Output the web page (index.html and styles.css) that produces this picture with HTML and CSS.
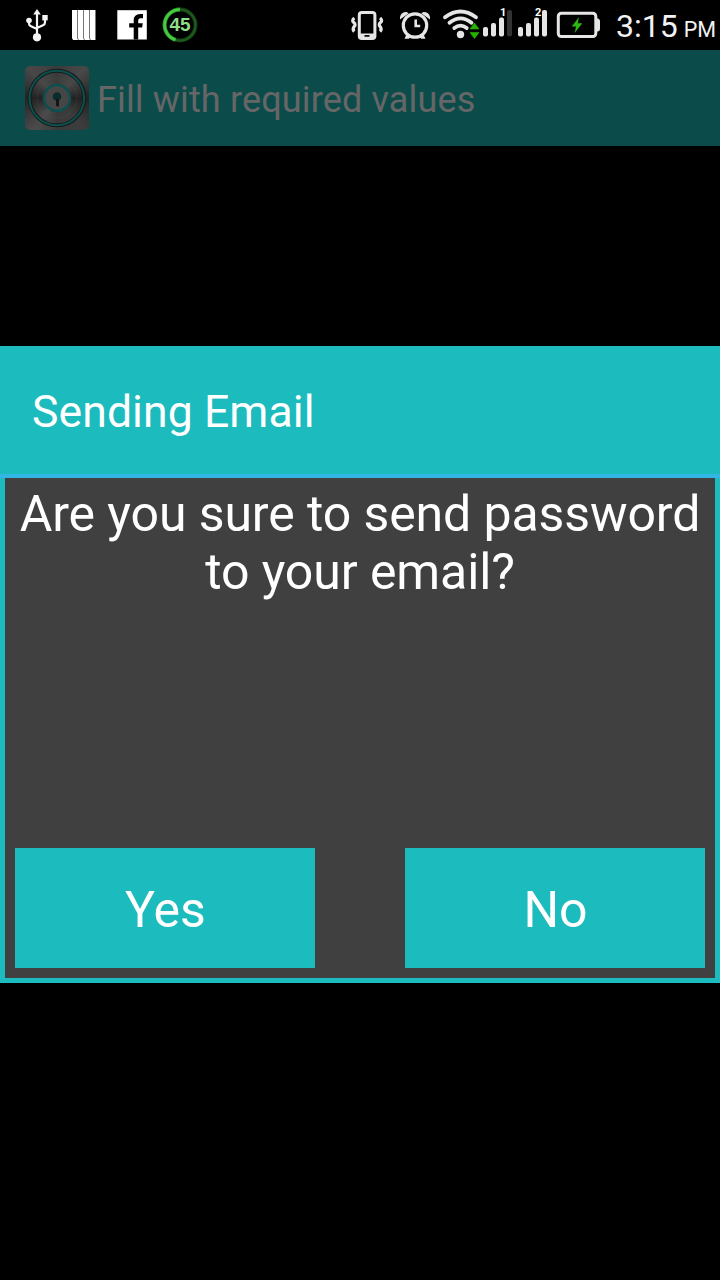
FILE: index.html
```html
<!DOCTYPE html>
<html lang="en">
<head>
  <meta charset="UTF-8" />
  <meta name="viewport" content="width=device-width, initial-scale=1.0" />
  <title>Sending Email</title>
  <link rel="stylesheet" href="styles.css">
</head>
<body>
  <div class="screen">
    <div class="status-bar">
      <div class="notifications">
        <!-- usb -->
        <svg width="26" height="50" viewBox="24 0 26 50" fill="#f4f4f4">
          <path d="M37 9l3.8 5.5h-7.6z"/>
          <rect x="42.3" y="15" width="5.4" height="5.4"/>
          <circle cx="29" cy="20.5" r="2.8"/>
          <circle cx="37" cy="37.3" r="4.1"/>
          <path d="M37 13v23M29 21v2.5q0 2 2 2.8l6 2.7M45 19v3.5q0 1.8-2 2.7l-6 2.8" fill="none" stroke="#f4f4f4" stroke-width="2.2"/>
        </svg>
        <!-- striped card -->
        <svg width="28" height="50" viewBox="70 0 28 50">
          <path d="M72 10h24v30H73l-1-2z" fill="#fff"/>
          <path d="M77.5 10v28l1 2M83.5 10v28l1 2M89.5 10v28l1 2M95.5 10v30" fill="none" stroke="#777" stroke-width="1"/>
        </svg>
        <!-- facebook -->
        <svg width="32" height="50" viewBox="116 0 32 50">
          <rect x="117.3" y="10.2" width="29.5" height="29.3" fill="#fff"/>
          <path d="M133.7 39.5v-12h-4.5v-4.3h4.5v-2.7q0-6.500 6.500-6.500h2.800v4.300h-2.500q-2.300 0-2.300 2.300v2.600h4.600l-.7 4.300h-3.900v12z" fill="#000"/>
        </svg>
        <!-- battery percentage ring -->
        <div class="ring">
          <svg width="36" height="50" viewBox="162 0 36 50" fill="none">
            <circle cx="180" cy="25" r="15.5" stroke="#123d12" stroke-width="4"/>
            <circle cx="180" cy="25" r="15.5" stroke="#1f5a1e" stroke-width="2"/>
            <path d="M180 9.5a15.5 15.5 0 0 0-4.5 30.3" stroke="#2c8f2a" stroke-width="4"/>
            <path d="M180 9.5a15.5 15.5 0 0 0-4.5 30.3" stroke="#45cc40" stroke-width="2.5"/>
          </svg>
          <span class="ring-value">45</span>
        </div>
      </div>
      <div class="system">
        <!-- vibrate -->
        <svg width="36" height="50" viewBox="349 0 36 50">
          <rect x="359.3" y="12.5" width="15.6" height="26" rx="2.5" fill="none" stroke="#e6e6e6" stroke-width="3"/>
          <path d="M359 33.5h16v5h-16z" fill="#e6e6e6"/>
          <rect x="364.5" y="35" width="5" height="1.8" fill="#111"/>
          <path d="M354.3 18q-3 2.5-.5 4.5t0 4.500q-1.500 2.500.5 4.500M380 18q3 2.500.5 4.500t0 4.500q1.500 2.500-.5 4.500" fill="none" stroke="#e6e6e6" stroke-width="3.2"/>
        </svg>
        <!-- alarm -->
        <svg width="34" height="50" viewBox="398 0 34 50">
          <circle cx="415" cy="25.5" r="11.7" fill="none" stroke="#e6e6e6" stroke-width="3.2"/>
          <path d="M415.7 19.5v6.5h4.5" fill="none" stroke="#e6e6e6" stroke-width="2.6"/>
          <path d="M400 19.5v-2.5q1-5 6.5-5l2.3 1.3zM430 19.5v-2.5q-1-5-6.5-5l-2.3 1.3zM404.5 38.8l2-4.500 4 2-1.500 2.500zM425.500 38.800l-2-4.500-4 2 1.500 2.500z" fill="#e6e6e6"/>
        </svg>
        <!-- wifi with transfer arrows -->
        <svg width="38" height="50" viewBox="442 0 38 50">
          <g fill="none" stroke="#e6e6e6" stroke-width="3.8" stroke-linecap="round">
            <path d="M445 17.3q15.5-11.600 31 0"/>
            <path d="M449.5 22.8q11-8.800 22 0"/>
            <path d="M454.3 28q6.200-4.800 12.400 0"/>
          </g>
          <circle cx="460.5" cy="34.5" r="3.7" fill="#e6e6e6"/>
          <path d="M474.5 23l4.5 6h-9zM474.500 38.500l4.500-6h-9z" fill="#24b400" stroke="#24b400" stroke-width=".6"/>
        </svg>
        <!-- sim 1 -->
        <div class="signal">
          <svg width="31" height="50" viewBox="482 0 31 50" fill="#e6e6e6">
            <rect x="483" y="27" width="5" height="9.5" rx="2"/>
            <rect x="491" y="23" width="5" height="13.5" rx="2"/>
            <rect x="499" y="17.5" width="5" height="19" rx="2"/>
            <rect x="507" y="10" width="5" height="26.5" rx="2" fill="#333"/>
          </svg>
          <span class="sim">1</span>
        </div>
        <!-- sim 2 -->
        <div class="signal">
          <svg width="31" height="50" viewBox="482 0 31 50" fill="#e6e6e6">
            <rect x="483" y="27" width="5" height="9.5" rx="2"/>
            <rect x="491" y="23" width="5" height="13.5" rx="2"/>
            <rect x="499" y="17.5" width="5" height="19" rx="2"/>
            <rect x="507" y="10" width="5" height="26.5" rx="2"/>
          </svg>
          <span class="sim">2</span>
        </div>
        <!-- battery -->
        <svg width="45" height="50" viewBox="556 0 45 50">
          <rect x="558.3" y="13.3" width="37.5" height="23.2" rx="3" fill="none" stroke="#e6e6e6" stroke-width="3"/>
          <path d="M597 18.5h1q2 .5 2 2.5v8q0 2-2 2.500h-1z" fill="#e6e6e6"/>
          <path d="M579 17l-7.2 9.500h4.200l-1.300 6.500 7.600-9.700h-4.500z" fill="#2bb810"/>
        </svg>
        <div class="clock">3:15 <span class="ampm">PM</span></div>
      </div>
    </div>

    <div class="action-bar">
      <!-- brushed metal vault icon -->
      <div class="app-icon">
        <svg width="64" height="64" viewBox="0 0 64 64" fill="none">
          <circle cx="32" cy="32" r="27.3" stroke="#161b1a" stroke-width="4"/>
          <circle cx="31.800" cy="32" r="27.3" stroke="#0b504e" stroke-width="2"/>
          <circle cx="32" cy="32" r="20" stroke="#555" stroke-width=".5" opacity=".5"/>
          <circle cx="32" cy="32" r="13" fill="#464646" stroke="#0b504e" stroke-width="2.5"/>
          <circle cx="32" cy="30.5" r="4.3" fill="#082d2c"/>
          <path d="M31 33h3v7.500h-2.200l-.8-1z" fill="#151515"/>
        </svg>
      </div>
      <span class="app-title">Fill with required values</span>
    </div>

    <div class="dialog">
      <div class="dialog-title"><span>Sending Email</span></div>
      <div class="dialog-body">
        <p class="message">Are you sure to send password<br>to your email?</p>
        <div class="buttons">
          <button class="btn">Yes</button>
          <button class="btn">No</button>
        </div>
      </div>
    </div>
  </div>
</body>
</html>
```
FILE: styles.css
```css
/* Reset */
* { margin: 0; padding: 0; box-sizing: border-box; }
body {
  background: #000;
  font-family: Roboto, sans-serif;
  overflow: hidden;
}
svg { display: block; flex: none; }
.screen {
  width: 720px;
  height: 1280px;
  background: #000;
}

/* Status bar */
.status-bar {
  display: flex;
  justify-content: space-between;
  height: 50px;
  padding: 0 3px 0 24px;
}
.notifications {
  display: flex;
}
.notifications svg { margin-right: 20px; }
.notifications svg:nth-of-type(2) { margin-right: 18px; }
.notifications svg:nth-of-type(3) { margin-right: 14px; }
.ring, .signal { position: relative; }
.ring-value {
  position: absolute;
  top: 14px;
  left: 0;
  width: 36px;
  text-align: center;
  font: bold 19px/22px "Liberation Sans", sans-serif;
  color: #8fdc8a;
}
.system {
  display: flex;
}
.system svg { margin-right: 5px; }
.system svg:nth-of-type(1) { margin-right: 13px; }
.system svg:nth-of-type(2) { margin-right: 10px; }
.system svg:nth-of-type(3) { margin-right: 2px; }
.system .signal svg { margin-right: 4px; }
.system .signal + .signal svg { margin-right: 8px; }
.sim {
  position: absolute;
  top: 7px;
  left: 18px;
  font: bold 11px/12px Roboto, sans-serif;
  color: #fff;
}
.clock {
  margin-left: 10px;
  width: 101px;
  white-space: nowrap;
  font-size: 32px;
  line-height: 52px;
  color: #f2f2f2;
}
.ampm {
  margin-left: -2px;
  font-size: 21.5px;
}

/* Dimmed action bar */
.action-bar {
  display: flex;
  align-items: center;
  gap: 8px;
  height: 96px;
  padding-left: 25px;
  background: #0b4c4b;
}
.app-icon {
  width: 64px;
  height: 64px;
  border-radius: 5px;
  background: conic-gradient(#3a3a3a, #484848 12%, #222 25%, #3c3c3c 38%, #3a3a3a 50%, #4b4b4b 60%, #222 75%, #484848 88%, #3a3a3a);
}
.app-title {
  padding-top: 4px;
  font-size: 36px;
  line-height: 42px;
  letter-spacing: 0.15px;
  color: #666;
}

/* Dialog */
.dialog {
  display: flex;
  flex-direction: column;
  height: 637px;
  margin-top: 200px;
  background: #1cbbbe;
  color: #fff;
}
.dialog-title {
  display: flex;
  align-items: center;
  height: 132px;
  padding: 4px 0 0 32px;
  border-bottom: 4px solid #33b5e5;
  font-size: 44.5px;
  letter-spacing: 0.1px;
}
.dialog-body {
  display: flex;
  flex-direction: column;
  justify-content: space-between;
  flex: 1;
  margin: 0 5px 5px;
  padding: 7px 10px 10px;
  background: #404040;
}
.message {
  text-align: center;
  white-space: nowrap;
  font-size: 50px;
  line-height: 58px;
  letter-spacing: -0.1px;
}
.buttons {
  display: flex;
  justify-content: space-between;
}
.btn {
  width: 300px;
  height: 120px;
  padding: 4px 0 0 1px;
  border: 0;
  background: #1cbbbe;
  color: #fff;
  font: 50px Roboto, sans-serif;
}
```
